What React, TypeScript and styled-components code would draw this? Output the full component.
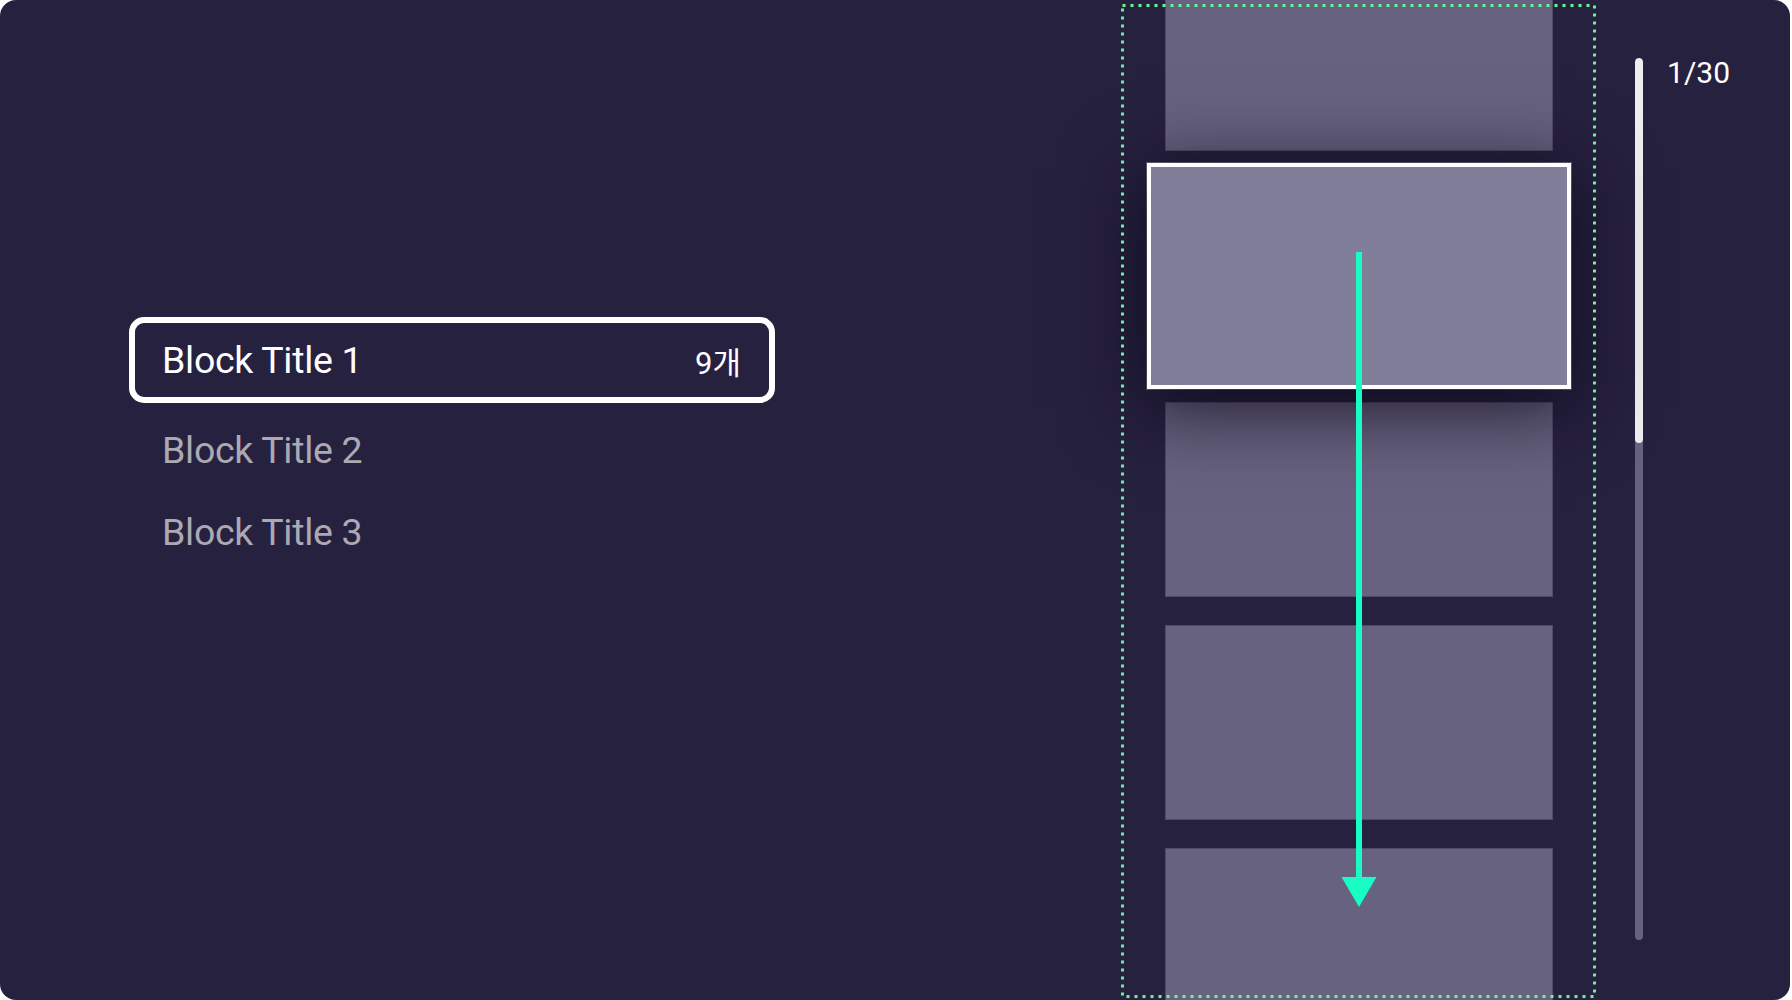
import React from 'react';
import styled, { createGlobalStyle } from 'styled-components';

const GlobalStyle = createGlobalStyle`
  html, body {
    margin: 0;
    padding: 0;
    background: #ffffff;
  }
  body {
    font-family: Roboto, "Noto Sans", "Noto Sans CJK KR", sans-serif;
  }
`;

const Screen = styled.div`
  width: 1790px;
  height: 1000px;
  border-radius: 16px;
  background: #272140;
  display: flex;
  overflow: hidden;
`;

const ListPane = styled.div`
  flex: 1;
  padding: 317px 0 0 129px;
  display: flex;
  flex-direction: column;
  align-items: flex-start;
`;

const ListItem = styled.div<{ $focused?: boolean }>`
  box-sizing: border-box;
  width: 646px;
  height: ${p => (p.$focused ? '86px' : '82px')};
  margin-bottom: ${p => (p.$focused ? '6px' : '0')};
  padding: 0 28px 0 27px;
  border: 6px solid ${p => (p.$focused ? '#ffffff' : 'transparent')};
  border-radius: 15px;
  display: flex;
  align-items: center;
  justify-content: space-between;
  color: ${p => (p.$focused ? '#ffffff' : '#aba9b1')};
`;

const ItemTitle = styled.span`
  font-family: Roboto, sans-serif;
  font-size: 37.5px;
  letter-spacing: -0.3px;
`;

const ItemCount = styled.span`
  font-family: Roboto, "Noto Sans CJK KR", sans-serif;
  font-size: 31px;
`;

const CardsArea = styled.div`
  position: relative;
  width: 475px;
  flex: 0 0 475px;
  height: 100%;
`;

const CardColumn = styled.div`
  margin-top: -44px;
  display: flex;
  flex-direction: column;
  align-items: center;
  gap: 28px;
`;

const Card = styled.div<{ $focused?: boolean }>`
  box-sizing: border-box;
  flex: 0 0 auto;
  width: ${p => (p.$focused ? '424px' : '388px')};
  height: ${p => (p.$focused ? '226px' : '195px')};
  margin: ${p => (p.$focused ? '-16px 0 -15px' : '0')};
  background: ${p => (p.$focused ? '#817e9a' : '#67627f')};
  border: ${p => (p.$focused ? '4px solid #ffffff' : '1px solid rgba(40, 33, 64, 0.35)')};
  position: relative;
  z-index: ${p => (p.$focused ? 2 : 1)};
  box-shadow: ${p =>
    p.$focused ? '0 14px 70px 6px rgba(12, 8, 24, 0.8), 0 0 0 1px rgba(180, 180, 190, 0.5)' : 'none'};
`;

const Guides = styled.svg`
  position: absolute;
  left: 0;
  top: 0;
  width: 475px;
  height: 1000px;
  z-index: 3;
  pointer-events: none;
`;

const ScrollColumn = styled.div`
  flex: 0 0 8px;
  margin-left: 39px;
  padding-top: 58px;
`;

const Track = styled.div`
  width: 8px;
  height: 882px;
  border-radius: 4px;
  background: #67627f;
  overflow: hidden;
`;

const Thumb = styled.div`
  width: 8px;
  border-radius: 4px;
  background: #eeedf1;
`;

const Counter = styled.div`
  flex: 0 0 123px;
  margin-left: 24px;
  padding-top: 58px;
  font-family: Roboto, sans-serif;
  font-size: 30px;
  line-height: 30px;
  color: #ffffff;
`;

const titles = [
  { name: 'Block Title 1', count: '9개' },
  { name: 'Block Title 2' },
  { name: 'Block Title 3' },
];

export default function App() {
  const total = 30;
  const current = 1;
  const thumbRatio = 385 / 882;

  return (
    <>
      <GlobalStyle />
      <Screen>
        <ListPane>
          {titles.map((t, i) => (
            <ListItem key={t.name} $focused={i === 0}>
              <ItemTitle>{t.name}</ItemTitle>
              {t.count && <ItemCount>{t.count}</ItemCount>}
            </ListItem>
          ))}
        </ListPane>

        <CardsArea>
          <CardColumn>
            {[0, 1, 2, 3, 4].map(i => (
              <Card key={i} $focused={i === 1} />
            ))}
          </CardColumn>
          <Guides viewBox="0 0 475 1000">
            <rect
              x="1.5"
              y="5.5"
              width="472"
              height="991"
              fill="none"
              stroke="#66f793"
              strokeWidth="3"
              strokeDasharray="3 5"
            />
            <rect x="235" y="252" width="6" height="628" fill="#18fdc3" />
            <polygon points="220.5,877 255.5,877 238,907" fill="#18fdc3" />
          </Guides>
        </CardsArea>

        <ScrollColumn>
          <Track>
            <Thumb style={{ height: `${thumbRatio * 100}%` }} />
          </Track>
        </ScrollColumn>

        <Counter>
          {current}/{total}
        </Counter>
      </Screen>
    </>
  );
}
